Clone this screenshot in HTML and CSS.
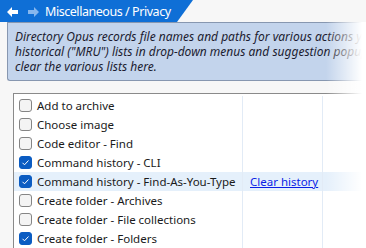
FILE: index.html
```html
<!DOCTYPE html>
<html>
<head>
<meta charset="utf-8">
<link rel="stylesheet" href="styles.css">
</head>
<body>
<div class="page">
  <div class="titlebar">
    <svg class="arrow" width="11" height="10" viewBox="0 0 11 10"><path d="M0 5 L5 0 L5 3 L11 3 L11 7 L5 7 L5 10 Z" fill="#ffffff"/></svg>
    <svg class="arrow fwd" width="11" height="10" viewBox="0 0 11 10"><path d="M11 5 L6 0 L6 3 L0 3 L0 7 L6 7 L6 10 Z" fill="#86b7ee"/></svg>
    <span class="title">Miscellaneous / Privacy</span>
  </div>
  <div class="note">
    <div class="line">Directory Opus records file names and paths for various actions you</div>
    <div class="line">historical ("MRU") lists in drop-down menus and suggestion popups</div>
    <div class="line">clear the various lists here.</div>
  </div>
  <div class="list">
    <div class="row"><div class="cell name"><span class="cb"></span>Add to archive</div><div class="cell"></div><div class="cell"></div></div>
    <div class="row"><div class="cell name"><span class="cb"></span>Choose image</div><div class="cell"></div><div class="cell"></div></div>
    <div class="row"><div class="cell name"><span class="cb"></span>Code editor - Find</div><div class="cell"></div><div class="cell"></div></div>
    <div class="row"><div class="cell name"><span class="cb on"><svg width="13" height="13" viewBox="0 0 13 13"><path d="M3.5 6.8 L5.5 8.8 L9.5 4.5" fill="none" stroke="#fff" stroke-width="1"/></svg></span>Command history - CLI</div><div class="cell"></div><div class="cell"></div></div>
    <div class="row sel"><div class="cell name"><span class="cb on"><svg width="13" height="13" viewBox="0 0 13 13"><path d="M3.5 6.8 L5.5 8.8 L9.5 4.5" fill="none" stroke="#fff" stroke-width="1"/></svg></span>Command history - Find-As-You-Type</div><div class="cell"><a class="link" href="#">Clear history</a></div><div class="cell"></div></div>
    <div class="row"><div class="cell name"><span class="cb"></span>Create folder - Archives</div><div class="cell"></div><div class="cell"></div></div>
    <div class="row"><div class="cell name"><span class="cb"></span>Create folder - File collections</div><div class="cell"></div><div class="cell"></div></div>
    <div class="row"><div class="cell name"><span class="cb on"><svg width="13" height="13" viewBox="0 0 13 13"><path d="M3.5 6.8 L5.5 8.8 L9.5 4.5" fill="none" stroke="#fff" stroke-width="1"/></svg></span>Create folder - Folders</div><div class="cell"></div><div class="cell"></div></div>
  </div>
  <div class="fade"></div>
</div>
</body>
</html>
```
FILE: styles.css
```css
html, body {
  margin: 0;
  padding: 0;
}
body {
  background: #f7f7f7;
  font-family: "Noto Sans", "Open Sans", sans-serif;
}
.page {
  position: relative;
  width: 366px;
  height: 248px;
  overflow: hidden;
}
.titlebar {
  width: 193px;
  height: 22px;
  background: #0f6fd6;
  clip-path: polygon(0 0, 193px 0, 177px 22px, 0 22px);
  display: flex;
  align-items: center;
  padding-left: 7px;
  box-sizing: border-box;
}
.arrow {
  display: block;
  flex: none;
  margin-top: 1px;
}
.arrow.fwd {
  margin-left: 10px;
}
.title {
  flex: none;
  color: #ffffff;
  font-size: 12.5px;
  letter-spacing: -0.45px;
  margin-left: 6px;
  white-space: nowrap;
}
.note {
  margin-left: 7px;
  height: 59px;
  box-sizing: border-box;
  border: 1px solid #8797b0;
  border-right: none;
  border-radius: 0 0 0 3px;
  background: #c3d4ec;
  padding: 6px 0 0 7px;
  font-style: italic;
  font-size: 12px;
  line-height: 15px;
  color: #1c1c30;
  overflow: hidden;
}
.line {
  white-space: nowrap;
}
.list {
  margin: 12px 0 0 13px;
  border-left: 1px solid #8a8a8a;
  border-top: 1px solid #8a8a8a;
  background: #ffffff;
  padding-top: 2px;
  height: 200px;
}
.row {
  display: grid;
  grid-template-columns: 229px 80px 80px;
  height: 19px;
  font-size: 11.5px;
  color: #1a1a1a;
}
.row.sel {
  background: #e5f0fb;
}
.cell {
  border-right: 1px solid #e2ebf6;
  display: flex;
  align-items: center;
  white-space: nowrap;
}
.cell.name {
  padding-left: 5px;
}
.cb {
  width: 13px;
  height: 13px;
  box-sizing: border-box;
  border: 1px solid #858585;
  border-radius: 3px;
  background: #f4f4f4;
  margin-right: 5px;
  flex: none;
  position: relative;
}
.cb.on {
  background: #0b5cc2;
  border-color: #0b5cc2;
}
.cb svg {
  position: absolute;
  left: -1px;
  top: -1px;
}
.link {
  color: #0a1ee6;
  text-decoration: underline;
  margin-left: 7px;
}
.fade {
  position: absolute;
  top: 22px;
  right: 0;
  width: 40px;
  bottom: 0;
  background: linear-gradient(to right, rgba(255,255,255,0), #ffffff 90%);
}
```
